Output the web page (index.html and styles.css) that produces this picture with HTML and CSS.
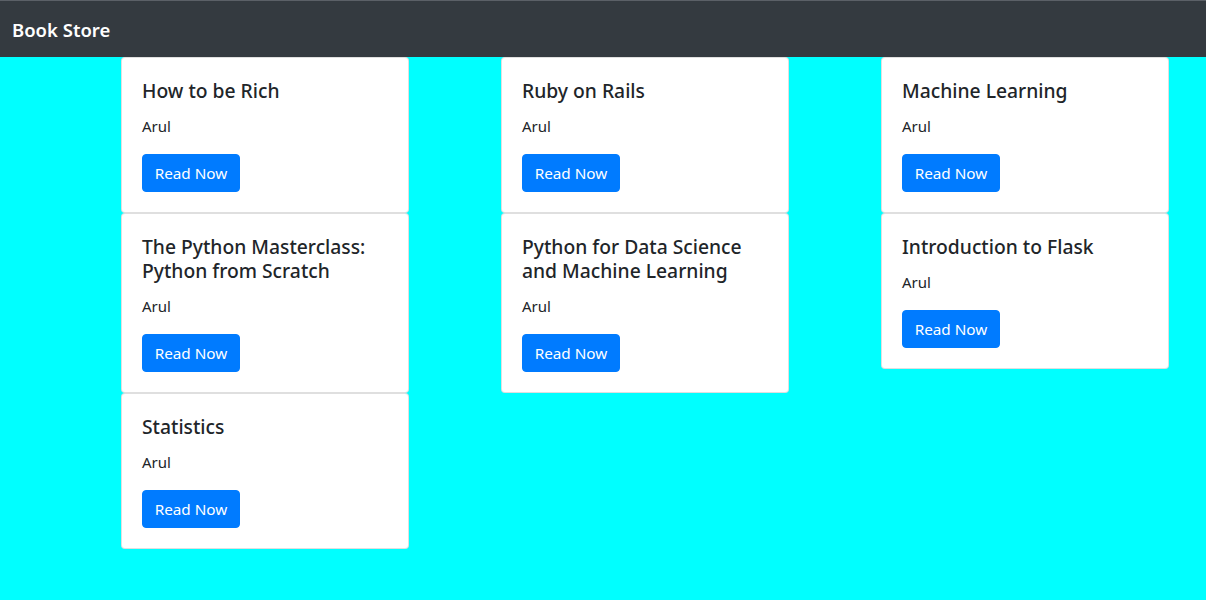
FILE: index.html
```html
<!DOCTYPE html>
<html>
<head>
<meta charset="utf-8">
<link rel="stylesheet" href="styles.css">
</head>
<body>
<nav class="navbar"><span class="brand">Book Store</span></nav>
<main class="grid">
  <div class="col">
    <div class="card"><h5 class="title">How to be Rich</h5><p class="text">Arul</p><a class="btn">Read Now</a></div>
    <div class="card"><h5 class="title">The Python Masterclass: Python from Scratch</h5><p class="text">Arul</p><a class="btn">Read Now</a></div>
    <div class="card"><h5 class="title">Statistics</h5><p class="text">Arul</p><a class="btn">Read Now</a></div>
  </div>
  <div class="col">
    <div class="card"><h5 class="title">Ruby on Rails</h5><p class="text">Arul</p><a class="btn">Read Now</a></div>
    <div class="card"><h5 class="title">Python for Data Science and Machine Learning</h5><p class="text">Arul</p><a class="btn">Read Now</a></div>
  </div>
  <div class="col">
    <div class="card"><h5 class="title">Machine Learning</h5><p class="text">Arul</p><a class="btn">Read Now</a></div>
    <div class="card"><h5 class="title">Introduction to Flask</h5><p class="text">Arul</p><a class="btn">Read Now</a></div>
  </div>
</main>
</body>
</html>
```
FILE: styles.css
```css
* { box-sizing: border-box; }
html, body { margin: 0; padding: 0; }
body {
  background: #00ffff;
  font-family: "Noto Sans", "Open Sans", sans-serif;
  font-size: 16px;
  line-height: 1.5;
  color: #212529;
  height: 600px;
  overflow: hidden;
}
.navbar {
  height: 57px;
  background: #343a40;
  border-top: 1px solid #5b6067;
  display: flex;
  align-items: center;
  padding: 0 12px;
}
.brand {
  color: #fff;
  font-size: 18.5px;
  font-weight: 600;
  line-height: 24px;
  margin-top: 1px;
}
.grid {
  display: flex;
  gap: 92px;
  padding-left: 121px;
  align-items: flex-start;
}
.col {
  width: 288px;
  display: flex;
  flex-direction: column;
}
.card {
  background: #fff;
  border: 1px solid rgba(0,0,0,.125);
  border-radius: 4px;
  padding: 20px;
}
.title {
  margin: 0 0 12px;
  font-size: 19.3px;
  font-weight: 500;
  line-height: 24px;
  position: relative;
  top: 1px;
}
.text {
  margin: 0 0 16px;
  font-size: 15px;
  line-height: 24px;
}
.btn {
  display: inline-block;
  background: #007bff;
  color: #fff;
  border: 1px solid #007bff;
  border-radius: 4px;
  padding: 6px 0;
  font-size: 15.3px;
  line-height: 24px;
  width: 98px;
  text-align: center;
  white-space: nowrap;
}
```
